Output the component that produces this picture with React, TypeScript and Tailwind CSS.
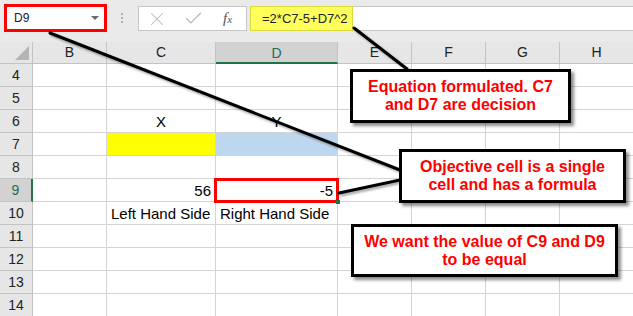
import { X, Check } from 'lucide-react';

type Cell = { text?: string; align?: 'left' | 'center' | 'right'; fill?: string };

const COLS = ['B', 'C', 'D', 'E', 'F', 'G', 'H'];
const ROWS = [4, 5, 6, 7, 8, 9, 10, 11, 12, 13, 14];

// sheet contents keyed by "col+row"
const CELLS: Record<string, Cell> = {
  C6: { text: 'X', align: 'center' },
  D6: { text: 'Y', align: 'center' },
  C7: { fill: 'bg-[#ffff00]' },
  D7: { fill: 'bg-[#bdd7ee]' },
  C9: { text: '56', align: 'right' },
  D9: { text: '-5', align: 'right' },
  C10: { text: 'Left Hand Side' },
  D10: { text: 'Right Hand Side' },
};

function TopBar() {
  return (
    <div className="flex h-[42px] items-start bg-[#eaeaea]">
      <div className="ml-[4px] mt-[4px] flex h-[28px] w-[103px] items-center justify-between border-[3px] border-[#ff0000] bg-white pl-[7px] pr-[5px] text-[12px] text-[#222]">
        <span>D9</span>
        <span className="h-0 w-0 border-x-[4px] border-t-[4px] border-x-transparent border-t-[#6b6b6b]" />
      </div>
      <div className="ml-[14px] mt-[13px] flex flex-col gap-[2px]">
        <span className="h-[2px] w-[2px] bg-[#b0b0b0]" />
        <span className="h-[2px] w-[2px] bg-[#b0b0b0]" />
        <span className="h-[2px] w-[2px] bg-[#b0b0b0]" />
      </div>
      <div className="ml-[15px] mt-[6px] flex h-[25px] w-[109px] items-center border border-[#c6c6c6] bg-white pl-[7px] text-[#b8b8b8]">
        <X size={22} strokeWidth={1.1} />
        <Check size={21} strokeWidth={1.5} className="ml-[15px]" />
        <span className="ml-[19px] font-['Liberation_Serif',serif] text-[15px] italic text-[#555]">
          f<span className="text-[11px]">x</span>
        </span>
      </div>
      <div className="ml-[3px] mt-[6px] flex h-[25px] flex-1 border-y border-[#c6c6c6] bg-white">
        <div className="-my-px flex h-[25px] w-[103px] items-center border border-[#dada3a] bg-[#ffff5c] pl-[11px] text-[13px] text-[#222]">
          =2*C7-5+D7^2
        </div>
      </div>
    </div>
  );
}

function Sheet() {
  return (
    <div className="grid grid-cols-[33px_74px_109px_122px_74px_74px_74px_74px] grid-rows-[22px_repeat(11,23px)] text-[15px] text-black">
      <div className="flex items-end justify-end border-b border-r border-[#c3c3c3] bg-[#e6e6e6] p-[3px]">
        <span className="h-0 w-0 border-b-[14px] border-l-[14px] border-b-[#b5b5b5] border-l-transparent" />
      </div>
      {COLS.map((c) => (
        <div
          key={c}
          className={
            c === 'D'
              ? 'flex items-center justify-center border-b-2 border-r border-b-[#217346] border-r-[#c3c3c3] bg-[#d2d2d2] pt-[2px] text-[14px] text-[#1e6b52]'
              : 'flex items-center justify-center border-b border-r border-[#c3c3c3] bg-[#e6e6e6] text-[14px] text-[#222]'
          }
        >
          {c}
        </div>
      ))}
      {ROWS.map((r) => (
        <Row key={r} r={r} />
      ))}
    </div>
  );
}

function Row({ r }: { r: number }) {
  const selected = r === 9;
  return (
    <>
      <div
        className={
          selected
            ? 'flex items-center justify-center border-b border-r-2 border-b-[#c3c3c3] border-r-[#217346] bg-[#d2d2d2] text-[14px] text-[#1e6b52]'
            : 'flex items-center justify-center border-b border-r border-[#c3c3c3] bg-[#e6e6e6] text-[14px] text-[#222]'
        }
      >
        {r}
      </div>
      {COLS.map((c) => {
        const cell = CELLS[c + r] ?? {};
        const align =
          cell.align === 'right' ? 'justify-end' : cell.align === 'center' ? 'justify-center' : 'justify-start';
        return (
          <div
            key={c}
            className={`flex items-end overflow-visible whitespace-nowrap border-b border-r border-[#d4d4d4] px-[4px] pb-[1px] leading-[19px] ${align} ${cell.fill ?? ''}`}
          >
            {cell.text}
          </div>
        );
      })}
    </>
  );
}

function Callout({ className, children }: { className: string; children: React.ReactNode }) {
  return (
    <div
      className={`absolute flex items-center justify-center border-[3px] border-black bg-white text-center text-[16px] font-bold leading-[18px] text-[#ff0000] shadow-[3px_3px_3px_rgba(0,0,0,0.45)] ${className}`}
    >
      {children}
    </div>
  );
}

function Annotations() {
  return (
    <>
      {/* selection outline on D9 */}
      <div className="absolute left-[214px] top-[178px] h-[25px] w-[125px] border-[3px] border-[#ff0000]" />
      <div className="absolute left-[336px] top-[200px] h-[4px] w-[4px] bg-[#217346]" />
      <svg
        className="pointer-events-none absolute left-0 top-0 drop-shadow-[2px_2px_1px_rgba(0,0,0,0.35)]"
        width={633}
        height={316}
      >
        <g stroke="#000" strokeWidth={3} strokeLinecap="round">
          <line x1={50} y1={33} x2={400} y2={170} />
          <line x1={354} y1={28} x2={407} y2={69} />
          <line x1={339} y1={193} x2={400} y2={180} />
        </g>
      </svg>
      <Callout className="left-[350px] top-[69px] h-[54px] w-[221px]">
        Equation formulated. C7
        <br />
        and D7 are decision
      </Callout>
      <Callout className="left-[399px] top-[149px] h-[54px] w-[227px]">
        Objective cell is a single
        <br />
        cell and has a formula
      </Callout>
      <Callout className="left-[351px] top-[224px] h-[53px] w-[267px]">
        We want the value of C9 and D9
        <br />
        to be equal
      </Callout>
    </>
  );
}

export default function App() {
  return (
    <div className="relative h-[316px] w-[633px] overflow-hidden bg-white font-['Liberation_Sans',Arial,sans-serif]">
      <TopBar />
      <Sheet />
      <Annotations />
    </div>
  );
}
